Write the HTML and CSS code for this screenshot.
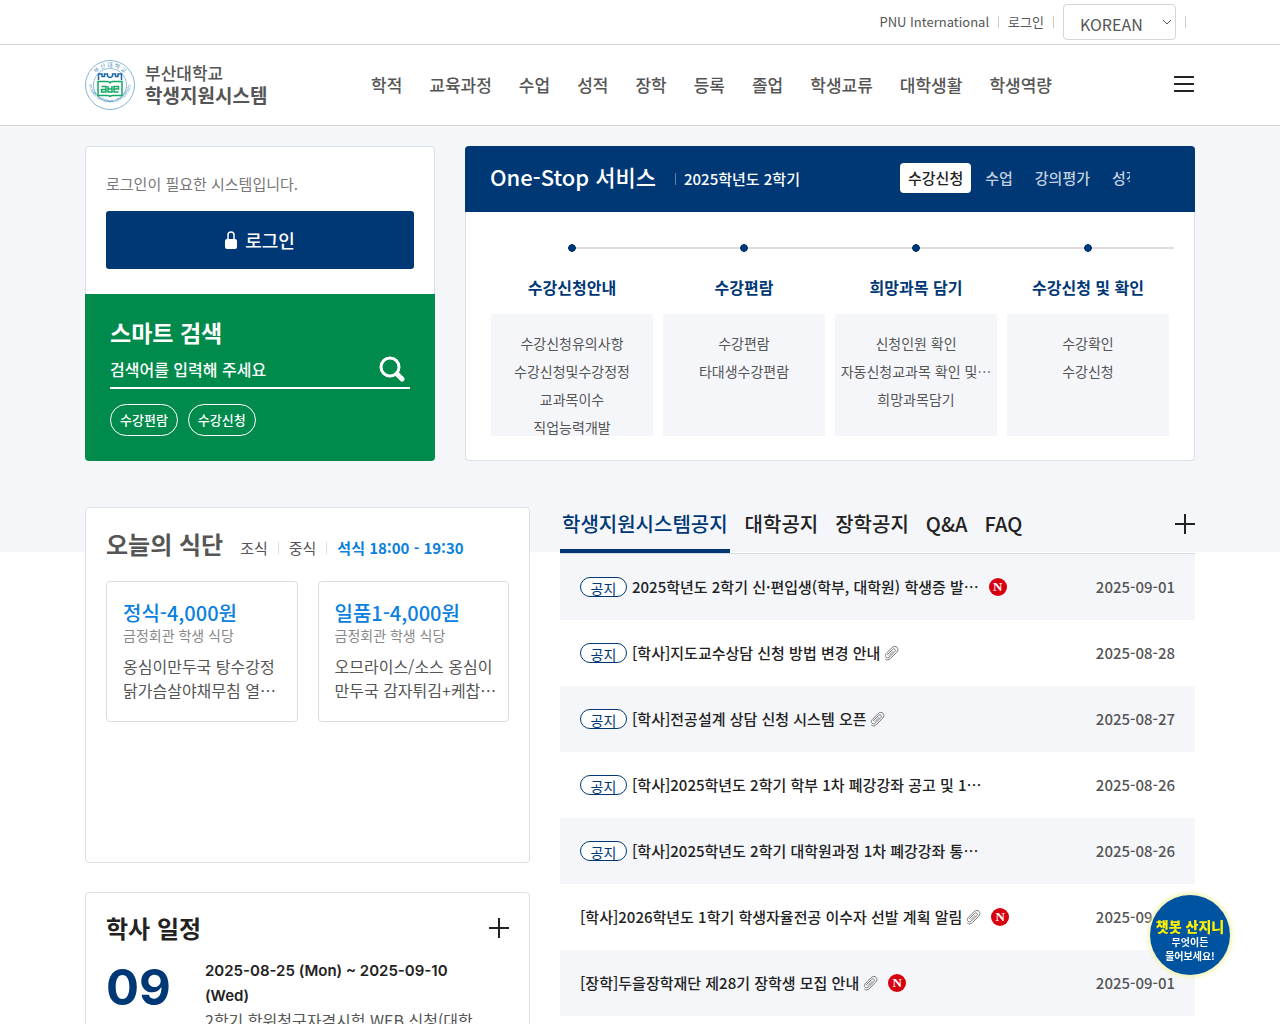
FILE: index.html
```html
<!DOCTYPE html>
<html lang="ko">
<head>
    <meta charset="utf-8">
    <meta name="viewport" content="width=device-width,initial-scale=1.0">
    <title>부산대학교 학생지원시스템</title>
    <link rel="stylesheet" href="styles.css">
</head>
<body>

<!-- 공통 아이콘 -->
<svg class="sprite" width="0" height="0" aria-hidden="true">
    <symbol id="ico-clip" viewBox="0 0 16 16">
        <path d="M4.2 9.9l5.3-5.4c1.7-1.7 3.9.4 2.3 2.1l-5.1 5.2c-2.7 2.7-6-.6-3.4-3.3l5.6-5.7c3.7-3.7 8.3.8 4.7 4.5l-6 6.1c-1.900 1.900-4 2-5.300.6" fill="none" stroke="#777" stroke-width="1"/>
        <path d="M10.300 6.100l-4.500 4.600" fill="none" stroke="#888" stroke-width="1"/>
    </symbol>
    <symbol id="ico-plus" viewBox="0 0 20 20">
        <path d="M10 0v20M0 10h20" fill="none" stroke="#222" stroke-width="2"/>
    </symbol>
</svg>

<div class="util">
    <ul class="wrap">
        <li><a href="#">PNU International</a></li>
        <li><a href="#">로그인</a></li>
        <li class="lang">
            <select aria-label="언어 선택">
                <option>KOREAN</option>
                <option>ENGLISH</option>
            </select>
            <svg width="10" height="6" viewBox="0 0 10 6"><path d="M1 1l4 4 4-4" fill="none" stroke="#555"/></svg>
        </li>
    </ul>
</div>

<header class="header">
    <div class="wrap">
        <a class="logo" href="#">
            <svg width="50" height="50" viewBox="0 0 100 100">
                <defs>
                    <path id="arcTop" d="M14 50a36 36 0 0 1 72 0"/>
                    <path id="arcBottom" d="M7 42a43 43 0 0 0 86 0"/>
                </defs>
                <circle cx="50" cy="50" r="49" fill="#fff" stroke="#5b9fc9" stroke-width="1.500"/>
                <circle cx="50" cy="50" r="33" fill="none" stroke="#6aa9cd" stroke-width="1.500"/>
                <text class="seal-ko"><textPath href="#arcTop" startOffset="50%">부 산 대 학 교</textPath></text>
                <text class="seal-en"><textPath href="#arcBottom" startOffset="50%">PUSAN NATIONAL UNIVERSITY</textPath></text>
                <path d="M27 40V28h7v5h5v-5h6v4c3 4 7 4 10 0v-4h6v5h5v-5h7v12" fill="none" stroke="#1d68a8" stroke-width="3"/>
                <path d="M26 43h18q6 0 6 4q0-4 6-4h18v28H56q-6 0-6 3q0-3-6-3H26z" fill="#fff" stroke="#12a866" stroke-width="3"/>
                <path d="M33 53h9v11h-9v-5h9M46 52v12h8V52M46 58h8M67 64h-9V53h9v5h-9" fill="none" stroke="#12a866" stroke-width="3"/>
            </svg>
            <span class="logo-txt">부산대학교<strong>학생지원시스템</strong></span>
        </a>
        <nav class="gnb">
            <a href="#">학적</a>
            <a href="#">교육과정</a>
            <a href="#">수업</a>
            <a href="#">성적</a>
            <a href="#">장학</a>
            <a href="#">등록</a>
            <a href="#">졸업</a>
            <a href="#">학생교류</a>
            <a href="#">대학생활</a>
            <a href="#">학생역량</a>
        </nav>
        <button type="button" class="btn-menu" aria-label="전체메뉴"><span></span><span></span><span></span></button>
    </div>
</header>

<main class="main">
    <div class="wrap">
        <div class="row row1">
            <!-- 로그인 / 검색 -->
            <section class="member">
                <div class="login">
                    <p>로그인이 필요한 시스템입니다.</p>
                    <a href="#" class="btn-login">
                        <svg width="12" height="18" viewBox="0 0 12 18"><path d="M3 9V4a3 3 0 0 1 6 0v5" fill="none" stroke="#fff" stroke-width="1.500"/><rect y="8" width="12" height="10" rx="2" fill="#fff"/></svg>
                        로그인
                    </a>
                </div>
                <form class="search">
                    <h2>스마트 검색</h2>
                    <div class="search-box">
                        <input type="text" aria-label="검색어" placeholder="검색어를 입력해 주세요">
                        <button type="button" aria-label="검색">
                            <svg width="26" height="26" viewBox="0 0 26 26"><circle cx="11" cy="11" r="9" fill="none" stroke="#fff" stroke-width="3"/><path d="M18 18l5 5" stroke="#fff" stroke-width="5" stroke-linecap="round"/></svg>
                        </button>
                    </div>
                    <div class="tags">
                        <a href="#">수강편람</a>
                        <a href="#">수강신청</a>
                    </div>
                </form>
            </section>

            <!-- One-Stop -->
            <section class="onestop">
                <div class="onestop-hd">
                    <h2>One-Stop 서비스</h2>
                    <span class="term">2025학년도 2학기</span>
                    <div class="onestop-tab">
                        <button type="button" class="on">수강신청</button>
                        <button type="button">수업</button>
                        <button type="button">강의평가</button>
                        <button type="button">성적</button>
                    </div>
                </div>
                <ol class="steps">
                    <li>
                        <h3>수강신청안내</h3>
                        <div class="links">
                            <a href="#">수강신청유의사항</a>
                            <a href="#">수강신청및수강정정</a>
                            <a href="#">교과목이수</a>
                            <a href="#">직업능력개발</a>
                        </div>
                    </li>
                    <li>
                        <h3>수강편람</h3>
                        <div class="links">
                            <a href="#">수강편람</a>
                            <a href="#">타대생수강편람</a>
                        </div>
                    </li>
                    <li>
                        <h3>희망과목 담기</h3>
                        <div class="links">
                            <a href="#">신청인원 확인</a>
                            <a href="#">자동신청교과목 확인 및…</a>
                            <a href="#">희망과목담기</a>
                        </div>
                    </li>
                    <li>
                        <h3>수강신청 및 확인</h3>
                        <div class="links">
                            <a href="#">수강확인</a>
                            <a href="#">수강신청</a>
                        </div>
                    </li>
                </ol>
            </section>
        </div>

        <div class="row row2">
            <div class="col-left">
                <!-- 식단 -->
                <section class="card meal">
                    <div class="meal-hd">
                        <h2>오늘의 식단</h2>
                        <div class="meal-tab">
                            <button type="button">조식</button>
                            <button type="button">중식</button>
                            <button type="button" class="on">석식 18:00 - 19:30</button>
                        </div>
                    </div>
                    <div class="meal-list">
                        <div class="menu">
                            <h3>정식-4,000원</h3>
                            <p class="place">금정회관 학생 식당</p>
                            <p>옹심이만두국 탕수강정<br>닭가슴살야채무침 열…</p>
                        </div>
                        <div class="menu">
                            <h3>일품1-4,000원</h3>
                            <p class="place">금정회관 학생 식당</p>
                            <p>오므라이스/소스 옹심이<br>만두국 감자튀김+케찹…</p>
                        </div>
                    </div>
                </section>

                <!-- 학사 일정 -->
                <section class="card schedule">
                    <div class="schedule-hd">
                        <h2>학사 일정</h2>
                        <a href="#" class="more" aria-label="더보기"><svg width="20" height="20"><use href="#ico-plus"/></svg></a>
                    </div>
                    <div class="schedule-bd">
                        <strong class="month">09</strong>
                        <div class="event">
                            <p class="date">2025-08-25 (Mon) ~ 2025-09-10 (Wed)</p>
                            <p>2학기 학위청구자격시험 WEB 신청(대학원)</p>
                        </div>
                    </div>
                </section>
            </div>

            <!-- 공지 -->
            <section class="notice">
                <div class="notice-hd">
                    <button type="button" class="on">학생지원시스템공지</button>
                    <button type="button">대학공지</button>
                    <button type="button">장학공지</button>
                    <button type="button">Q&amp;A</button>
                    <button type="button">FAQ</button>
                    <a href="#" class="more" aria-label="더보기"><svg width="20" height="20"><use href="#ico-plus"/></svg></a>
                </div>
                <ul class="notice-bd">
                    <li>
                        <span class="badge">공지</span>
                        <a href="#">2025학년도 2학기 신·편입생(학부, 대학원) 학생증 발…</a>
                        <span class="new">N</span>
                        <span class="day">2025-09-01</span>
                    </li>
                    <li>
                        <span class="badge">공지</span>
                        <a href="#">[학사]지도교수상담 신청 방법 변경 안내</a>
                        <svg class="clip" width="16" height="16"><use href="#ico-clip"/></svg>
                        <span class="day">2025-08-28</span>
                    </li>
                    <li>
                        <span class="badge">공지</span>
                        <a href="#">[학사]전공설계 상담 신청 시스템 오픈</a>
                        <svg class="clip" width="16" height="16"><use href="#ico-clip"/></svg>
                        <span class="day">2025-08-27</span>
                    </li>
                    <li>
                        <span class="badge">공지</span>
                        <a href="#">[학사]2025학년도 2학기 학부 1차 폐강강좌 공고 및 1…</a>
                        <span class="day">2025-08-26</span>
                    </li>
                    <li>
                        <span class="badge">공지</span>
                        <a href="#">[학사]2025학년도 2학기 대학원과정 1차 폐강강좌 통…</a>
                        <span class="day">2025-08-26</span>
                    </li>
                    <li>
                        <a href="#">[학사]2026학년도 1학기 학생자율전공 이수자 선발 계획 알림</a>
                        <svg class="clip" width="16" height="16"><use href="#ico-clip"/></svg>
                        <span class="new">N</span>
                        <span class="day">2025-09-01</span>
                    </li>
                    <li>
                        <a href="#">[장학]두을장학재단 제28기 장학생 모집 안내</a>
                        <svg class="clip" width="16" height="16"><use href="#ico-clip"/></svg>
                        <span class="new">N</span>
                        <span class="day">2025-09-01</span>
                    </li>
                </ul>
            </section>
        </div>
    </div>
</main>

<a href="#" class="chatbot"><strong>챗봇 산지니</strong>무엇이든<br>물어보세요!</a>

</body>
</html>
```
FILE: styles.css
```css
*{
    margin: 0;
    padding: 0;
    box-sizing: border-box;
}
body{
    font: 16px/24px "Noto Sans CJK KR", "Noto Sans", sans-serif;
    color: #555;
    background: #fff;
}
ul, ol, li{
    list-style: none;
}
a{
    color: inherit;
    text-decoration: none;
}
button, input, select{
    font: inherit;
    color: inherit;
    border: 0;
    background: none;
}
button{
    cursor: pointer;
    white-space: nowrap;
}
svg{
    display: block;
    flex: none;
}
.sprite{
    position: absolute;
}
.wrap{
    max-width: 1140px;
    margin: 0 auto;
    padding: 0 15px;
}

/* 상단 유틸 */
.util{
    border-bottom: 1px solid #d5d5d5;
}
.util .wrap{
    display: flex;
    justify-content: flex-end;
    align-items: center;
    height: 44px;
    font-size: 13px;
}
.util li{
    display: flex;
    align-items: center;
}
.util li::after{
    content: "";
    width: 1px;
    height: 12px;
    margin: 0 9px;
    background: #ccc;
}
.util .lang{
    position: relative;
}
.util .lang select{
    width: 113px;
    height: 36px;
    padding: 4px 16px 0;
    border: 1px solid #d5d5d5;
    border-radius: 4px;
    font-size: 16px;
    appearance: none;
}
.util .lang svg{
    position: absolute;
    top: 15px;
    right: 23px;
    pointer-events: none;
}

/* 헤더 */
.header{
    border-bottom: 1px solid #d5d5d5;
}
.header .wrap{
    display: flex;
    align-items: center;
    height: 80px;
}
.logo{
    display: flex;
    align-items: center;
    gap: 10px;
    width: 286px;
}
.logo-txt{
    padding-bottom: 2px;
    font-size: 17px;
    line-height: 22px;
    font-weight: 500;
}
.logo-txt strong{
    display: block;
    font-size: 19px;
}
.seal-ko, .seal-en{
    font-size: 11px;
    text-anchor: middle;
    fill: #3b86ba;
}
.seal-en{
    font-family: "Liberation Sans", sans-serif;
    font-size: 8px;
}
.gnb{
    display: flex;
    gap: 27px;
    font-size: 17px;
    font-weight: 500;
    white-space: nowrap;
}
.btn-menu{
    display: flex;
    flex-direction: column;
    gap: 5px;
    width: 22px;
    margin-left: auto;
    padding: 0 1px 2px;
}
.btn-menu span{
    height: 2px;
    background: #222;
}

/* 메인 */
.main{
    padding: 20px 0 40px;
    background: linear-gradient(#f4f6fa, #f4f6fa) no-repeat 0 0 / 100% 426px;
}
.row{
    display: grid;
    gap: 30px;
}
.row1{
    grid-template-columns: 35fr 73fr;
    margin-bottom: 46px;
}
.row2{
    grid-template-columns: 445fr 635fr;
}
.row > *{
    min-width: 0;
}

/* 로그인 */
.member{
    display: flex;
    flex-direction: column;
    border-radius: 4px;
    overflow: hidden;
}
.login{
    padding: 25px 20px;
    background: #fff;
    border: 1px solid #d9dfe6;
    border-bottom: 0;
    border-radius: 4px 4px 0 0;
}
.login p{
    margin-bottom: 15px;
    font-size: 15px;
    color: #777;
}
.btn-login{
    display: flex;
    justify-content: center;
    align-items: center;
    gap: 8px;
    height: 58px;
    font-size: 18px;
    font-weight: 500;
    color: #fff;
    background: #003876;
    border-radius: 3px;
}
.search{
    flex: 1;
    padding: 23px 25px;
    color: #fff;
    background: #008a4b;
}
.search h2{
    font-size: 23px;
    line-height: 30px;
}
.search-box{
    display: flex;
    align-items: center;
    height: 42px;
    padding: 3px 5px 0 0;
    border-bottom: 2px solid #fff;
}
.search-box input{
    flex: 1;
    min-width: 0;
    font-weight: 500;
    outline: 0;
}
.search-box input::placeholder{
    color: #fff;
    opacity: 1;
}
.tags{
    display: flex;
    gap: 10px;
    margin-top: 15px;
    font-size: 13px;
    font-weight: 500;
}
.tags a{
    padding: 3px 9px;
    border: 1px solid #fff;
    border-radius: 16px;
}

/* One-Stop */
.onestop{
    background: #fff;
    border: 1px solid #d9dfe6;
    border-top: 0;
    border-radius: 4px;
}
.onestop-hd{
    display: flex;
    align-items: center;
    height: 66px;
    margin: 0 -1px;
    padding: 0 65px 2px 25px;
    color: #fff;
    background: #003876;
    border-radius: 4px 4px 0 0;
}
.onestop-hd h2{
    padding-bottom: 4px;
    font-size: 22px;
    font-weight: 500;
    white-space: nowrap;
}
.term{
    display: flex;
    align-items: center;
    gap: 8px;
    margin-left: 19px;
    padding-top: 2px;
    font-size: 15px;
    font-weight: 500;
    white-space: nowrap;
}
.term::before{
    content: "";
    width: 1px;
    height: 12px;
    background: #5c80a8;
}
.onestop-tab{
    display: flex;
    gap: 6px;
    width: 230px;
    margin-left: auto;
    overflow: hidden;
    font-size: 15px;
    font-weight: 500;
    color: #c3cfde;
}
.onestop-tab button{
    padding: 3px 8px;
    border-radius: 4px;
}
.onestop-tab .on{
    color: #222;
    background: #fff;
}
.steps{
    display: grid;
    grid-template-columns: repeat(4, 1fr);
    padding: 32px 20px 24px;
    text-align: center;
}
.steps li{
    min-width: 0;
}
/* 단계 점과 연결선 */
.steps li::before{
    content: "";
    display: block;
    height: 8px;
    background: radial-gradient(circle 4px, #003876 90%, transparent) , linear-gradient(#ddd, #ddd) no-repeat center / 100% 2px;
}
.steps li:first-child::before{
    background: radial-gradient(circle 4px, #003876 90%, transparent) , linear-gradient(#ddd, #ddd) no-repeat right / 50% 2px;
}
.steps h3{
    margin: 23px 0 15px;
    font-size: 16px;
    color: #003876;
}
.links{
    height: 122px;
    margin: 0 5px;
    padding-top: 15px;
    overflow: hidden;
    background: #f4f6fa;
}
.links a{
    display: block;
    overflow: hidden;
    font-size: 14px;
    line-height: 28px;
    white-space: nowrap;
}

/* 카드 공통 */
.col-left{
    display: flex;
    flex-direction: column;
    gap: 29px;
}
.card{
    padding: 20px;
    background: #fff;
    border: 1px solid #d9e0e6;
    border-radius: 4px;
}
.card h2{
    font-size: 24px;
    line-height: 32px;
}

/* 식단 */
.meal{
    min-height: 356px;
}
.meal-hd{
    display: flex;
    align-items: flex-end;
    gap: 17px;
    margin-bottom: 21px;
}
.meal-tab{
    display: flex;
    font-size: 15px;
}
.meal-tab button + button{
    display: flex;
    align-items: center;
}
.meal-tab button + button::before{
    content: "";
    width: 1px;
    height: 12px;
    margin: 0 10px;
    background: #ddd;
}
.meal-tab .on{
    font-weight: 700;
    color: #0a80e0;
}
.meal-list{
    display: grid;
    grid-template-columns: repeat(2, minmax(0, 1fr));
    gap: 20px;
}
.menu{
    padding: 19px 16px;
    border: 1px solid #d9dde2;
    border-radius: 4px;
}
.menu h3{
    font-size: 20px;
    font-weight: 500;
    color: #0a80e0;
}
.menu p{
    white-space: nowrap;
}
.menu .place{
    margin-bottom: 8px;
    font-size: 14px;
    line-height: 21px;
    color: #888;
}

/* 학사 일정 */
.schedule-hd{
    display: flex;
    justify-content: space-between;
    align-items: center;
    margin: -1px 0 14px;
}
.schedule h2{
    color: #222;
}
.schedule-bd{
    display: flex;
}
.month{
    width: 99px;
    font: 700 49px/60px Inter, sans-serif;
    color: #003876;
}
.event{
    flex: 1;
    padding-right: 24px;
    line-height: 25px;
}
.event .date{
    font-family: Inter, sans-serif;
    font-size: 15px;
    font-weight: 600;
    color: #222;
}

/* 공지 */
.notice-hd{
    display: flex;
    gap: 13px;
    height: 47px;
    border-bottom: 1px solid #d5dae0;
}
.notice-hd button{
    height: 46px;
    padding: 0 2px 13px;
    font-size: 20px;
    font-weight: 500;
    color: #222;
}
.notice-hd .on{
    color: #003876;
    border-bottom: 4px solid #003876;
    padding-bottom: 9px;
}
.notice-hd .more{
    margin: 7px 0 0 auto;
}
.notice-bd li{
    display: flex;
    align-items: center;
    height: 66px;
    padding: 0 20px;
    font-size: 15px;
}
.notice-bd li:nth-child(odd){
    background: #f4f6fa;
}
.notice-bd a{
    overflow: hidden;
    font-weight: 500;
    color: #222;
    white-space: nowrap;
}
.badge{
    flex: none;
    width: 47px;
    height: 20px;
    margin-right: 5px;
    overflow: hidden;
    border: 1px solid #003876;
    border-radius: 10px;
    font-size: 14px;
    line-height: 20px;
    text-align: center;
    color: #003876;
    background: #fff;
}
.clip{
    margin-left: 3px;
}
.new{
    flex: none;
    width: 18px;
    height: 18px;
    margin-left: 10px;
    border-radius: 50%;
    font: 700 13px/18px "Liberation Serif", serif;
    text-align: center;
    color: #fff;
    background: #d7000f;
}
.day{
    margin-left: auto;
    padding-left: 20px;
    font-weight: 500;
    white-space: nowrap;
}

/* 챗봇 */
.chatbot{
    position: fixed;
    right: 50px;
    bottom: 49px;
    width: 80px;
    height: 80px;
    padding-top: 22px;
    border-radius: 50%;
    font-size: 10px;
    line-height: 14px;
    font-weight: 700;
    text-align: center;
    white-space: nowrap;
    color: #fff;
    background: #0053a0;
    box-shadow: 0 0 4px 2px #f3f3a8;
}
.chatbot strong{
    display: block;
    font-size: 14px;
    line-height: 18px;
    font-weight: 900;
    color: #fff000;
}
```
